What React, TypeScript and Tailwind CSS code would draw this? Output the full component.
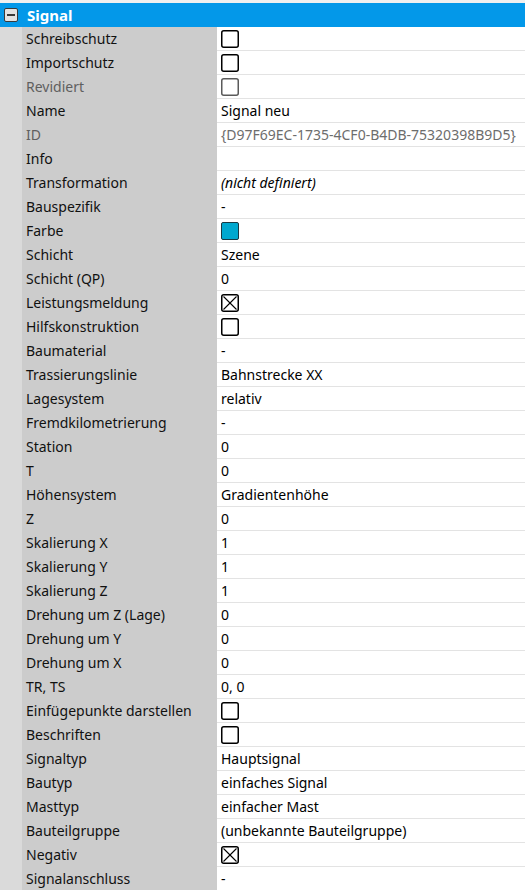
import React from "react";

type Val =
  | { kind: "text"; text: string; gray?: boolean; italic?: boolean }
  | { kind: "check"; checked?: boolean; gray?: boolean }
  | { kind: "color" }
  | { kind: "empty" };

type Row = { label: string; grayLabel?: boolean; value: Val };

const t = (text: string): Val => ({ kind: "text", text });
const cb = (checked = false): Val => ({ kind: "check", checked });

const rows: Row[] = [
  { label: "Schreibschutz", value: cb() },
  { label: "Importschutz", value: cb() },
  { label: "Revidiert", grayLabel: true, value: { kind: "check", gray: true } },
  { label: "Name", value: t("Signal neu") },
  { label: "ID", grayLabel: true, value: { kind: "text", text: "{D97F69EC-1735-4CF0-B4DB-75320398B9D5}", gray: true } },
  { label: "Info", value: { kind: "empty" } },
  { label: "Transformation", value: { kind: "text", text: "(nicht definiert)", italic: true } },
  { label: "Bauspezifik", value: t("-") },
  { label: "Farbe", value: { kind: "color" } },
  { label: "Schicht", value: t("Szene") },
  { label: "Schicht (QP)", value: t("0") },
  { label: "Leistungsmeldung", value: cb(true) },
  { label: "Hilfskonstruktion", value: cb() },
  { label: "Baumaterial", value: t("-") },
  { label: "Trassierungslinie", value: t("Bahnstrecke XX") },
  { label: "Lagesystem", value: t("relativ") },
  { label: "Fremdkilometrierung", value: t("-") },
  { label: "Station", value: t("0") },
  { label: "T", value: t("0") },
  { label: "Höhensystem", value: t("Gradientenhöhe") },
  { label: "Z", value: t("0") },
  { label: "Skalierung X", value: t("1") },
  { label: "Skalierung Y", value: t("1") },
  { label: "Skalierung Z", value: t("1") },
  { label: "Drehung um Z (Lage)", value: t("0") },
  { label: "Drehung um Y", value: t("0") },
  { label: "Drehung um X", value: t("0") },
  { label: "TR, TS", value: t("0, 0") },
  { label: "Einfügepunkte darstellen", value: cb() },
  { label: "Beschriften", value: cb() },
  { label: "Signaltyp", value: t("Hauptsignal") },
  { label: "Bautyp", value: t("einfaches Signal") },
  { label: "Masttyp", value: t("einfacher Mast") },
  { label: "Bauteilgruppe", value: t("(unbekannte Bauteilgruppe)") },
  { label: "Negativ", value: cb(true) },
  { label: "Signalanschluss", value: t("-") },
];

function CheckBox({ checked, gray }: { checked?: boolean; gray?: boolean }) {
  return (
    <svg width="18" height="18" viewBox="0 0 18 18" className="block">
      <rect
        x="0.75"
        y="0.75"
        width="16.5"
        height="16.5"
        rx="2"
        fill="white"
        stroke={gray ? "#5a5a5a" : "#000"}
        strokeWidth="1.5"
      />
      {checked && (
        <>
          <line x1="2.5" y1="2.5" x2="15.5" y2="15.5" stroke="#000" strokeWidth="1.1" />
          <line x1="15.5" y1="2.5" x2="2.5" y2="15.5" stroke="#000" strokeWidth="1.1" />
        </>
      )}
    </svg>
  );
}

function Value({ v }: { v: Val }) {
  if (v.kind === "check") return <CheckBox checked={v.checked} gray={v.gray} />;
  if (v.kind === "color")
    return <div className="w-[18px] h-[18px] rounded-[2px] border-[1.5px] border-[#1a3a44] bg-[#00a8cf]" />;
  if (v.kind === "empty") return null;
  return (
    <span
      className={`whitespace-nowrap ${v.gray ? "text-[#6d6d6d]" : "text-black"} ${v.italic ? "italic" : ""}`}
    >
      {v.text}
    </span>
  );
}

export default function App() {
  return (
    <div
      className="w-[525px] h-[890px] overflow-hidden bg-[#f0f0f0] pt-[3px] text-[14px] leading-none"
      style={{ fontFamily: '"Noto Sans", "Open Sans", sans-serif' }}
    >
      <div className="h-[24px] bg-[#0398e9] flex items-center">
        <div className="w-[22px] flex justify-center">
          <div className="w-[14px] h-[14px] rounded-[2px] border border-[#3a3a3a] bg-[#e2e2e2] flex items-center justify-center">
            <div className="w-[8px] h-[2px] bg-[#3a3a3a]" />
          </div>
        </div>
        <span className="ml-[5px] text-white font-bold text-[15px]">Signal</span>
      </div>
      <div className="flex flex-col">
        {rows.map((r, i) => (
          <div key={i} className="flex h-[24px] bg-[#dadada]">
            <div className="w-[22px] shrink-0" />
            <div
              className={`w-[195px] shrink-0 bg-[#cccccc] pl-[4px] flex items-center ${
                r.grayLabel ? "text-[#5f5f5f]" : "text-[#111111]"
              }`}
            >
              {r.label}
            </div>
            <div className="flex-1 bg-white border-b border-[#e3e3e3] pl-[4px] flex items-center overflow-hidden">
              <Value v={r.value} />
            </div>
          </div>
        ))}
      </div>
    </div>
  );
}
